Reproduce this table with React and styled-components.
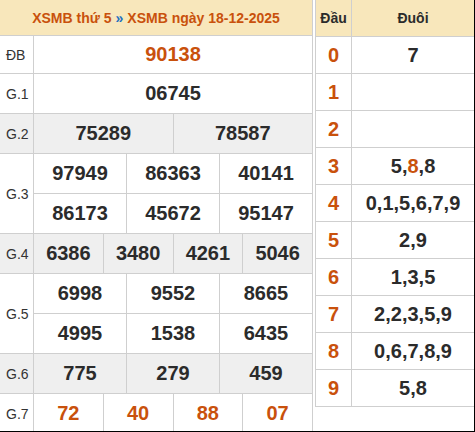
import React from "react";
import styled, { createGlobalStyle } from "styled-components";

const Global = createGlobalStyle`
  html, body { margin: 0; padding: 0; background: #fff; }
  body { font-family: "Liberation Sans", Arial, sans-serif; }
`;

const ORANGE = "#c9510c";
const LINE = "#cfcfcf";
const CREAM = "#f8e7bb";
const GRAY = "#efefef";

const Frame = styled.div`
  box-sizing: border-box;
  width: 475px;
  height: 432px;
  display: flex;
  align-items: flex-start;
  gap: 2px;
  overflow: hidden;
  border-right: 1px solid #000;
  border-bottom: 1px solid #000;
`;

const ResultGrid = styled.div`
  width: 312px;
  flex: none;
  display: grid;
  grid-template-columns: 33px repeat(12, 1fr);
  grid-template-rows: 35px 37px repeat(9, 39px);
  gap: 1px;
  background: ${LINE};
  border-right: 1px solid ${LINE};
`;

const Title = styled.div`
  grid-column: 1 / -1;
  background: ${CREAM};
  display: flex;
  align-items: center;
  justify-content: center;
  font-weight: bold;
  font-size: 14px;
  color: ${ORANGE};
  white-space: nowrap;
`;

const Arrow = styled.span`
  color: #1e6fc0;
  margin: 0 4px;
`;

const Label = styled.div`
  grid-row: span ${(p) => p.$rows || 1};
  background: ${(p) => (p.$alt ? GRAY : "#fff")};
  display: flex;
  align-items: center;
  padding-left: 6px;
  font-size: 14px;
  color: #333;
`;

const Num = styled.div`
  grid-column: span ${(p) => p.$span};
  background: ${(p) => (p.$alt ? GRAY : "#fff")};
  display: flex;
  align-items: center;
  justify-content: center;
  font-weight: bold;
  font-size: 20px;
  color: ${(p) => (p.$hot ? ORANGE : "#2b2b2b")};
`;

const LotoGrid = styled.div`
  flex: 1;
  display: grid;
  grid-template-columns: 35px 1fr;
  grid-template-rows: 36px repeat(10, 36px);
  gap: 1px;
  background: ${LINE};
  border-left: 1px solid ${LINE};
  border-bottom: 1px solid ${LINE};
`;

const Head = styled.div`
  background: ${CREAM};
  display: flex;
  align-items: center;
  justify-content: center;
  font-weight: bold;
  font-size: 14px;
  color: #2b2b2b;
`;

const Digit = styled.div`
  background: #fff;
  display: flex;
  align-items: center;
  justify-content: center;
  font-weight: bold;
  font-size: 20px;
  color: ${ORANGE};
`;

const Tails = styled.div`
  background: #fff;
  display: flex;
  align-items: center;
  justify-content: center;
  font-weight: bold;
  font-size: 20px;
  color: #2b2b2b;
`;

const Hot = styled.span`
  color: ${ORANGE};
`;

const prizes = [
  { label: "ĐB", rows: [["90138"]], hot: true },
  { label: "G.1", rows: [["06745"]] },
  { label: "G.2", rows: [["75289", "78587"]], alt: true },
  { label: "G.3", rows: [["97949", "86363", "40141"], ["86173", "45672", "95147"]] },
  { label: "G.4", rows: [["6386", "3480", "4261", "5046"]], alt: true },
  { label: "G.5", rows: [["6998", "9552", "8665"], ["4995", "1538", "6435"]] },
  { label: "G.6", rows: [["775", "279", "459"]], alt: true },
  { label: "G.7", rows: [["72", "40", "88", "07"]], hot: true },
];

const loto = [
  ["7"],
  [],
  [],
  ["5", { v: "8", hot: true }, "8"],
  ["0", "1", "5", "6", "7", "9"],
  ["2", "9"],
  ["1", "3", "5"],
  ["2", "2", "3", "5", "9"],
  ["0", "6", "7", "8", "9"],
  ["5", "8"],
];

export default function App() {
  return (
    <>
      <Global />
      <Frame>
        <ResultGrid>
          <Title>
            XSMB thứ 5<Arrow>»</Arrow>XSMB ngày 18-12-2025
          </Title>
          {prizes.map((p) => (
            <React.Fragment key={p.label}>
              <Label $rows={p.rows.length} $alt={p.alt}>
                {p.label}
              </Label>
              {p.rows.map((row, ri) =>
                row.map((n, ni) => (
                  <Num
                    key={`${ri}-${ni}`}
                    $span={12 / row.length}
                    $alt={p.alt}
                    $hot={p.hot}
                  >
                    {n}
                  </Num>
                ))
              )}
            </React.Fragment>
          ))}
        </ResultGrid>
        <LotoGrid>
          <Head>Đầu</Head>
          <Head>Đuôi</Head>
          {loto.map((tails, d) => (
            <React.Fragment key={d}>
              <Digit>{d}</Digit>
              <Tails>
                {tails.map((t, i) => (
                  <React.Fragment key={i}>
                    {i > 0 && ","}
                    {typeof t === "object" ? <Hot>{t.v}</Hot> : t}
                  </React.Fragment>
                ))}
              </Tails>
            </React.Fragment>
          ))}
        </LotoGrid>
      </Frame>
    </>
  );
}
